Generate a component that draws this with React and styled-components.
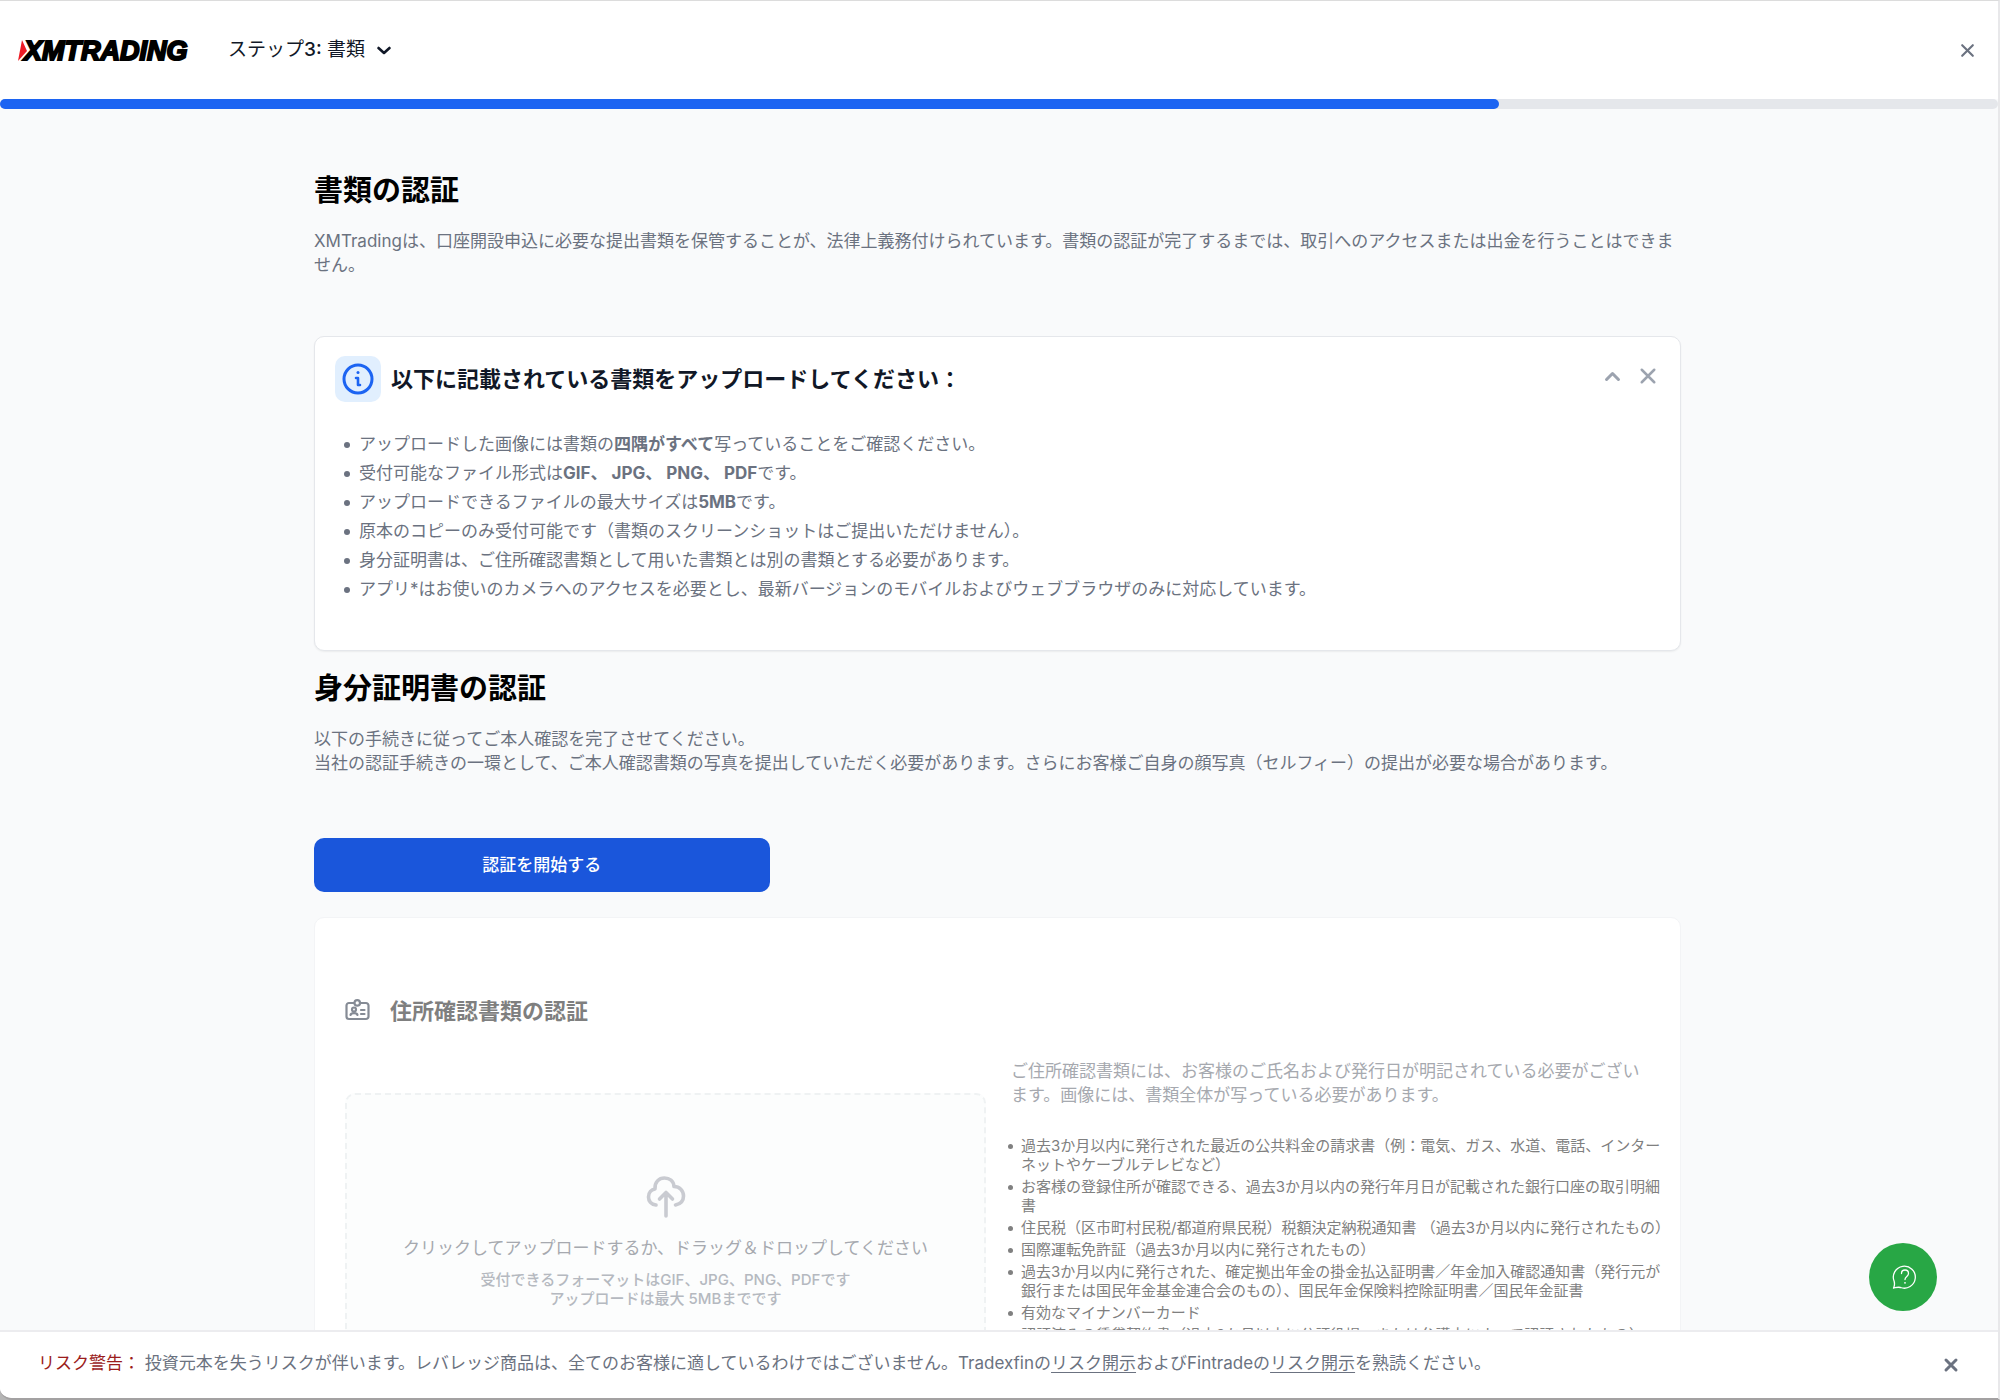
import styled, { createGlobalStyle } from "styled-components";

const GlobalStyle = createGlobalStyle`
  * {
    box-sizing: border-box;
    margin: 0;
    padding: 0;
  }
  body {
    font-family: Inter, "Noto Sans CJK JP", sans-serif;
    font-size: 17px;
    line-height: 24px;
    color: #6b7280;
    background: #b5b5b5;
  }
  button {
    font: inherit;
    border: none;
    background: none;
    cursor: pointer;
  }
`;

const Page = styled.div`
  height: 100vh;
  display: flex;
  flex-direction: column;
  background: #f9fafb;
  border-top: 1px solid #dcdcdc;
  border-right: 2px solid #e8e8ea;
  border-bottom: 2px solid #a3a1a2;
  border-radius: 0 0 0 12px;
  overflow: hidden;
`;
const Header = styled.header`
  height: 98px;
  flex-shrink: 0;
  display: flex;
  align-items: center;
  gap: 34px;
  padding: 0 22px 0 18px;
  background: white;
`;
const StepButton = styled.button`
  display: flex;
  align-items: center;
  gap: 11px;
  color: #111827;
  font-size: 19px;
  b {
    font-weight: 500;
  }
`;
const IconButton = styled.button`
  display: flex;
  color: ${(props) => props.$color || "#6b7280"};
`;
const CloseHeader = styled(IconButton)`
  margin-left: auto;
`;
const Progress = styled.div`
  height: 10px;
  flex-shrink: 0;
  background: #e5e7eb;
  border-radius: 5px;
`;
const ProgressBar = styled.div`
  width: 75%;
  height: 100%;
  background: #1c64f2;
  border-radius: 5px;
`;
const Main = styled.main`
  flex: 1;
  min-height: 0;
  padding-right: 3px;
  overflow-y: auto;
  scrollbar-width: none;
`;
const Content = styled.div`
  max-width: 1367px;
  margin: 0 auto;
  padding: 64px 0;
`;
const Title = styled.h2`
  color: black;
  font-size: 29px;
  line-height: 36px;
  font-weight: 700;
  margin-bottom: 20px;
`;
const Intro = styled.p`
  margin-bottom: ${(props) => props.$gap}px;
`;
const Card = styled.section`
  background: white;
  border: 1px solid #e5e7eb;
  border-radius: 10px;
`;
const InfoCard = styled(Card)`
  padding: 19px 20px 49px;
  margin-bottom: 20px;
  box-shadow: 0 1px 2px rgba(0, 0, 0, 0.06);
`;
const CardHead = styled.div`
  display: flex;
  align-items: center;
  gap: 10px;
`;
const InfoBadge = styled.div`
  width: 46px;
  height: 46px;
  display: flex;
  align-items: center;
  justify-content: center;
  color: #1c64f2;
  background: #e1effe;
  border-radius: 10px;
`;
const CardTitle = styled.h3`
  color: ${(props) => props.$color || "#111827"};
  font-size: 22px;
  line-height: 28px;
  font-weight: 700;
`;
const CardActions = styled.div`
  display: flex;
  align-items: center;
  gap: 16px;
  margin-left: auto;
  padding: 0 2px 6px 0;
`;
const List = styled.ul`
  list-style: none;
  li {
    position: relative;
  }
  li::before {
    content: "";
    position: absolute;
    left: -15px;
    top: 10px;
    width: 6px;
    height: 6px;
    border-radius: 50%;
    background: currentColor;
  }
`;
const InfoList = styled(List)`
  display: grid;
  gap: 5px;
  padding: 30px 0 0 24px;
`;
const StartButton = styled.button`
  display: block;
  width: calc(100% / 3);
  padding: 15px;
  margin-bottom: 25px;
  color: white;
  font-weight: 500;
  background: #1a56db;
  border-radius: 10px;
`;
const AddressCard = styled(Card)`
  border-color: #f3f4f6;
  padding: 79px 8px 40px 30px;
`;
const AddressHead = styled(CardHead)`
  gap: 20px;
  margin-bottom: 34px;
`;
const Columns = styled.div`
  display: grid;
  grid-template-columns: 641px 1fr;
  gap: 25px;
`;
const DropZone = styled.button`
  height: 320px;
  margin-top: 34px;
  display: flex;
  flex-direction: column;
  align-items: center;
  padding-top: 80px;
  color: #b5b9c0;
  background: #fcfdfd;
  border: 2px dashed #eff2f3;
  border-radius: 10px;
`;
const DropText = styled.span`
  margin-top: 17px;
  color: #a6a9af;
`;
const DropNote = styled.span`
  margin-top: 10px;
  font-size: 15px;
  line-height: 19px;
  font-weight: 500;
`;
const Details = styled.div`
  color: #a6a9af;
`;
const DetailsText = styled.p`
  padding-right: 18px;
  margin-bottom: 29px;
`;
const DocList = styled(List)`
  display: grid;
  gap: 3px;
  padding-left: 10px;
  font-size: 15px;
  line-height: 19px;
  color: #808080;
  li::before {
    top: 8px;
    left: -13px;
    width: 5px;
    height: 5px;
  }
`;
const Footer = styled.footer`
  min-height: 68px;
  flex-shrink: 0;
  display: flex;
  align-items: center;
  justify-content: space-between;
  padding: 0 39px 0 38px;
  background: white;
  border-top: 2px solid #ececef;
  p {
    padding-bottom: 4px;
  }
`;
const Risk = styled.span`
  color: #9b1c1c;
`;
const RiskLink = styled.a`
  color: inherit;
  text-decoration: underline;
  text-underline-offset: 3px;
`;
const HelpButton = styled.button`
  position: fixed;
  right: 63px;
  bottom: 89px;
  width: 68px;
  height: 68px;
  display: flex;
  align-items: center;
  justify-content: center;
  padding-left: 4px;
  color: white;
  background: #28a745;
  border-radius: 50%;
`;

const Logo = () => (
  <svg width="176" height="26" viewBox="0 0 176 26" role="img" aria-label="XMTRADING">
    <path d="M4 3 L9 14 L0 24 Z" fill="#ed1c24" />
    <text
      x="6"
      y="22.500"
      fontFamily="'Liberation Sans', sans-serif"
      fontSize="27"
      fontWeight="700"
      fontStyle="italic"
      stroke="black"
      strokeWidth="2"
    >
      XMTRADING
    </text>
  </svg>
);

const Cross = ({ size, weight }) => (
  <svg width={size} height={size} viewBox="0 0 16 16" fill="none" stroke="currentColor" strokeWidth={weight} strokeLinecap="round">
    <path d="M3 3 L13 13 M13 3 L3 13" />
  </svg>
);

const Chevron = ({ up, size }) => (
  <svg width={size} height={size} viewBox="0 0 16 16" fill="none" stroke="currentColor" strokeWidth="2.6" strokeLinecap="round" strokeLinejoin="round">
    <path d={up ? "M3 10.5 L8 5.5 L13 10.5" : "M2.5 6 L8 11 L13.5 6"} />
  </svg>
);

const InfoIcon = () => (
  <svg width="32" height="32" viewBox="0 0 32 32" fill="none" stroke="currentColor" strokeWidth="3" strokeLinecap="round" strokeLinejoin="round">
    <circle cx="16" cy="16" r="14" />
    <path d="M14 15 H16 V22 M16 22 H18" strokeWidth="2.6" />
    <circle cx="16" cy="9.5" r="1.5" fill="currentColor" stroke="none" />
  </svg>
);

const IdIcon = () => (
  <svg width="25" height="25" viewBox="0 2 25 25" fill="none" stroke="#858b95" strokeWidth="2.2" strokeLinecap="round" strokeLinejoin="round">
    <path d="M9 6 H4 a2.5 2.5 0 0 0 -2.5 2.5 V19.5 a2.5 2.5 0 0 0 2.5 2.5 H21 a2.5 2.5 0 0 0 2.5 -2.5 V8.5 A2.5 2.5 0 0 0 21 6 H15.5" />
    <rect x="9.5" y="3.2" width="5.5" height="5.5" rx="2.7" />
    <circle cx="9" cy="12.5" r="2" />
    <path d="M5.5 18 C6 15.500 12 15.500 12.500 18 M16 13 H19.500 M16 17 H19.500" />
  </svg>
);

const CloudIcon = () => (
  <svg width="40" height="44" viewBox="0 0 40 44" fill="none" stroke="#c9cbd1" strokeWidth="3.6" strokeLinecap="round" strokeLinejoin="round">
    <path d="M10 30 C5 29.500 2.500 26 2.500 22 C2.500 17.500 5.500 14.500 9 14 C8.500 7 13 3 18.500 3 C23.500 3 27.500 6 28 11.500 C33.500 11.500 37.500 15.500 37.500 21 C37.500 25.500 34.500 29 29.500 30" />
    <path d="M20 41 V18 M13.500 24 L20 17.500 L26.500 24" />
  </svg>
);

const HelpIcon = () => (
  <svg width="26" height="26" viewBox="0 0 26 26" fill="none" stroke="currentColor" strokeWidth="1.3" strokeLinecap="round" strokeLinejoin="round">
    <path d="M1.500 24 C2.800 21.500 2.800 20 2.200 17.500 A11 11 0 1 1 8.500 23.500 C6 22.800 4.500 23.400 1.500 24 Z" />
    <path d="M9.500 9.500 C9.500 4.800 16.500 4.800 16.500 9.500 C16.500 12.500 13 12.300 13 15.500" />
    <circle cx="13" cy="18.800" r="0.900" fill="currentColor" stroke="none" />
  </svg>
);

const documents = [
  "過去3か月以内に発行された最近の公共料金の請求書（例：電気、ガス、水道、電話、インターネットやケーブルテレビなど）",
  "お客様の登録住所が確認できる、過去3か月以内の発行年月日が記載された銀行口座の取引明細書",
  "住民税（区市町村民税/都道府県民税）税額決定納税通知書 （過去3か月以内に発行されたもの）",
  "国際運転免許証（過去3か月以内に発行されたもの）",
  "過去3か月以内に発行された、確定拠出年金の掛金払込証明書／年金加入確認通知書（発行元が銀行または国民年金基金連合会のもの）、国民年金保険料控除証明書／国民年金証書",
  "有効なマイナンバーカード",
  "認証済みの賃貸契約書（過去3か月以内に公証役場、または弁護士によって認証されたもの）",
];

export default function App() {
  return (
    <Page>
      <GlobalStyle />
      <Header>
        <Logo />
        <StepButton>
          <span>
            ステップ<b>3:</b> 書類
          </span>
          <Chevron size={16} />
        </StepButton>
        <CloseHeader aria-label="閉じる">
          <Cross size={17} weight={2} />
        </CloseHeader>
      </Header>
      <Progress>
        <ProgressBar />
      </Progress>
      <Main>
        <Content>
          <Title>書類の認証</Title>
          <Intro $gap={59}>
            XMTradingは、口座開設申込に必要な提出書類を保管することが、法律上義務付けられています。書類の認証が完了するまでは、取引へのアクセスまたは出金を行うことはできません。
          </Intro>
          <InfoCard>
            <CardHead>
              <InfoBadge>
                <InfoIcon />
              </InfoBadge>
              <CardTitle>以下に記載されている書類をアップロードしてください：</CardTitle>
              <CardActions>
                <IconButton $color="#9ca3af" aria-label="折りたたむ">
                  <Chevron up size={19} />
                </IconButton>
                <IconButton $color="#9ca3af" aria-label="閉じる">
                  <Cross size={20} weight={2} />
                </IconButton>
              </CardActions>
            </CardHead>
            <InfoList>
              <li>
                アップロードした画像には書類の<b>四隅がすべて</b>写っていることをご確認ください。
              </li>
              <li>
                受付可能なファイル形式は<b>GIF、 JPG、 PNG、 PDF</b>です。
              </li>
              <li>
                アップロードできるファイルの最大サイズは<b>5MB</b>です。
              </li>
              <li>原本のコピーのみ受付可能です（書類のスクリーンショットはご提出いただけません）。</li>
              <li>身分証明書は、ご住所確認書類として用いた書類とは別の書類とする必要があります。</li>
              <li>
                アプリ*はお使いのカメラへのアクセスを必要とし、最新バージョンのモバイルおよびウェブブラウザのみに対応しています。
              </li>
            </InfoList>
          </InfoCard>
          <Title>身分証明書の認証</Title>
          <Intro $gap={63}>
            以下の手続きに従ってご本人確認を完了させてください。
            <br />
            当社の認証手続きの一環として、ご本人確認書類の写真を提出していただく必要があります。さらにお客様ご自身の顔写真（セルフィー）の提出が必要な場合があります。
          </Intro>
          <StartButton>認証を開始する</StartButton>
          <AddressCard>
            <AddressHead>
              <IdIcon />
              <CardTitle $color="#7f7f7f">住所確認書類の認証</CardTitle>
            </AddressHead>
            <Columns>
              <DropZone>
                <CloudIcon />
                <DropText>クリックしてアップロードするか、ドラッグ＆ドロップしてください</DropText>
                <DropNote>
                  受付できるフォーマットはGIF、JPG、PNG、PDFです
                  <br />
                  アップロードは最大 5MBまでです
                </DropNote>
              </DropZone>
              <Details>
                <DetailsText>
                  ご住所確認書類には、お客様のご氏名および発行日が明記されている必要がございます。画像には、書類全体が写っている必要があります。
                </DetailsText>
                <DocList>
                  {documents.map((text) => (
                    <li key={text}>{text}</li>
                  ))}
                </DocList>
              </Details>
            </Columns>
          </AddressCard>
        </Content>
      </Main>
      <Footer>
        <p>
          <Risk>リスク警告：</Risk> 投資元本を失うリスクが伴います。レバレッジ商品は、全てのお客様に適しているわけではございません。Tradexfinの
          <RiskLink href="#tradexfin">リスク開示</RiskLink>およびFintradeの
          <RiskLink href="#fintrade">リスク開示</RiskLink>を熟読ください。
        </p>
        <IconButton aria-label="閉じる">
          <Cross size={16} weight={3} />
        </IconButton>
      </Footer>
      <HelpButton aria-label="ヘルプ">
        <HelpIcon />
      </HelpButton>
    </Page>
  );
}
